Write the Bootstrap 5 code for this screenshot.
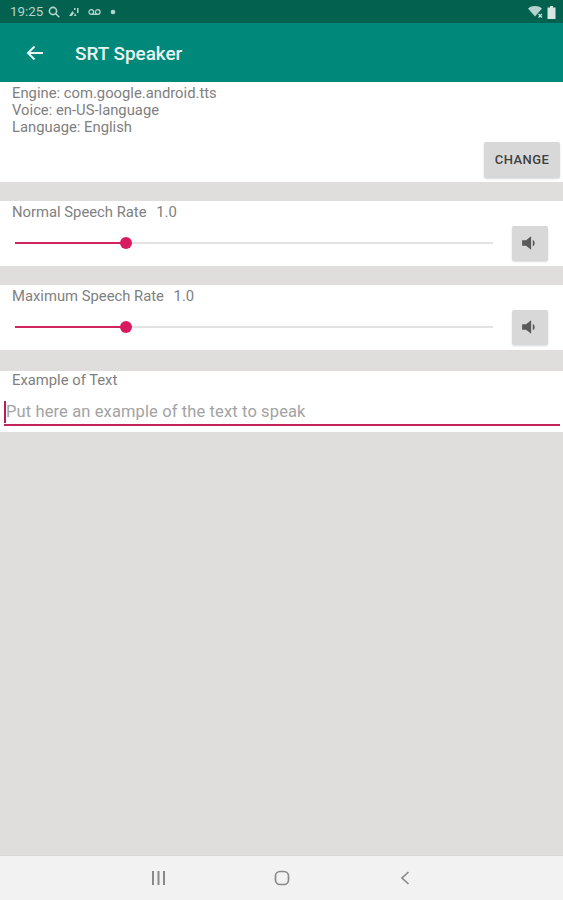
<!DOCTYPE html>
<html lang="en">
<head>
    <meta charset="UTF-8">
    <meta name="viewport" content="width=device-width, initial-scale=1">
    <title>SRT Speaker</title>
    <link href="https://cdn.jsdelivr.net/npm/bootstrap@5.3.2/dist/css/bootstrap.min.css" rel="stylesheet">
    <style>
        html, body {
            height: 900px;
            overflow: hidden;
        }
        body {
            background: #dfdedc;
            font-family: Roboto, "Liberation Sans", sans-serif;
            color: #808080;
        }
        .app-screen { height: 900px; }
        .status-bar {
            height: 23px;
            background: #02624f;
            color: #b5d3ce;
            font-size: 13.3px;
            padding: 1px 7px 0 10px;
        }
        .status-left { gap: 5px; }
        .tool-bar {
            height: 59px;
            background: #00887a;
            color: #eaf5f3;
            padding-left: 26px;
        }
        .tool-title {
            font-size: 18.9px;
            font-weight: 500;
            margin-left: 31px;
            padding-top: 3px;
        }
        .panel-box { background: #fff; }
        .engine-box {
            height: 100px;
            margin-bottom: 19px;
            padding: 3px 3px 4px 12px;
        }
        .info-text {
            font-size: 14.8px;
            line-height: 17px;
        }
        .change-btn {
            width: 76px;
            height: 36px;
            background: #d8d8d8;
            color: #3f3f3f;
            font-size: 13px;
            font-weight: 500;
            letter-spacing: .4px;
            border-radius: 2px;
            box-shadow: 0 1px 2px rgba(0, 0, 0, .15);
        }
        .rate-box {
            height: 65px;
            margin-bottom: 19px;
            padding: 3px 15px 0 12px;
        }
        .rate-box .rate-num { margin-left: 6px; }
        .rate-row {
            height: 36px;
            margin-top: 4px;
            padding-left: 3px;
        }
        .seek-line {
            height: 2px;
            width: 478px;
            background: #e2e2e2;
        }
        .seek-fill {
            width: 110px;
            height: 2px;
            background: #d0245f;
        }
        .seek-dot {
            width: 12px;
            height: 12px;
            top: -5px;
            left: 105px;
            background: #d81b60;
        }
        .speak-btn {
            width: 36px;
            height: 35px;
            margin-left: 19px;
            background: #d8d8d8;
            border-radius: 2px;
            box-shadow: 0 1px 2px rgba(0, 0, 0, .15);
        }
        .example-box {
            height: 61px;
            margin-top: 21px;
            padding: 0 3px 0 4px;
        }
        .example-label {
            padding-left: 8px;
            padding-top: 1px;
            height: 29px;
        }
        .example-input {
            height: 26px;
            border-bottom: 2px solid #c2255c;
            font-size: 16.5px;
            line-height: 24px;
            color: #a3a3a3;
            letter-spacing: .12px;
        }
        .text-caret {
            width: 2px;
            height: 22px;
            background: #c2185b;
        }
        .nav-strip {
            height: 45px;
            background: #f2f2f2;
            border-top: 1px solid #d8d8d8;
        }
        .nav-slot { width: 123px; }
    </style>
</head>
<body>
    <div class="app-screen d-flex flex-column">
        <!-- status bar -->
        <div class="status-bar d-flex align-items-center justify-content-between">
            <div class="status-left d-flex align-items-center">
                <span>19:25</span>
                <svg width="12" height="12" viewBox="0 0 12 12" fill="none" stroke="#b5d3ce" stroke-width="1.6"><circle cx="5" cy="5" r="3.6"/><path d="M7.8 7.8 11.3 11.3"/></svg>
                <svg class="ms-1" width="10" height="10" viewBox="0 0 10 10" fill="#b5d3ce"><path d="M0 9 3.500 4l1.500 2-2 3zM5 9l1-3 1.500 3zM5 1h1.500v2H5zM8 1h1.500v5H8z"/></svg>
                <svg class="ms-1" width="13" height="8" viewBox="0 0 14 8" fill="none" stroke="#b5d3ce" stroke-width="1.4"><circle cx="3.500" cy="4" r="2.500"/><circle cx="10.500" cy="4" r="2.500"/><path d="M3.500 6.500h7"/></svg>
                <svg class="ms-1" width="6" height="6" viewBox="0 0 6 6" fill="#b5d3ce"><circle cx="3" cy="3" r="2.300"/></svg>
            </div>
            <div class="d-flex align-items-center gap-1">
                <svg width="15" height="12" viewBox="0 0 15 12" fill="#b5d3ce"><path d="M0 2.500C3.500-.8 10.500-.8 14 2.500L7 10.500z"/><path d="M10.500 8l3.500 3.500M14 8l-3.500 3.500" stroke="#d5e6e3" stroke-width="1.200"/></svg>
                <svg width="9" height="13" viewBox="0 0 9 13" fill="#d5e6e3"><path d="M3 0h3v1.500h2.500V13H.5V1.500H3z"/></svg>
            </div>
        </div>

        <!-- toolbar -->
        <div class="tool-bar d-flex align-items-center">
            <svg width="18" height="16" viewBox="0 0 18 16" fill="none" stroke="#eaf5f3" stroke-width="2"><path d="M17 8H2M8.500 1.500 2 8l6.500 6.500"/></svg>
            <span class="tool-title">SRT Speaker</span>
        </div>

        <!-- engine -->
        <div class="panel-box engine-box d-flex flex-column">
            <div class="info-text">Engine: com.google.android.tts</div>
            <div class="info-text">Voice: en-US-language</div>
            <div class="info-text">Language: English</div>
            <div class="mt-auto d-flex justify-content-end">
                <button type="button" class="btn change-btn p-0 border-0">CHANGE</button>
            </div>
        </div>

        <!-- normal rate -->
        <div class="panel-box rate-box">
            <div class="info-text">Normal Speech Rate <span class="rate-num">1.0</span></div>
            <div class="rate-row d-flex align-items-center">
                <div class="seek-line position-relative">
                    <div class="seek-fill"></div>
                    <div class="seek-dot position-absolute rounded-circle"></div>
                </div>
                <div class="speak-btn d-flex align-items-center justify-content-center">
                    <svg width="18" height="18" viewBox="0 0 16 16" fill="#5a5a5a"><path d="M1 5.500h3.500L9 2v12L4.500 10.500H1z"/><path d="M10.500 5a3.500 3.500 0 0 1 0 6z"/></svg>
                </div>
            </div>
        </div>

        <!-- maximum rate -->
        <div class="panel-box rate-box mb-0">
            <div class="info-text">Maximum Speech Rate <span class="rate-num">1.0</span></div>
            <div class="rate-row d-flex align-items-center">
                <div class="seek-line position-relative">
                    <div class="seek-fill"></div>
                    <div class="seek-dot position-absolute rounded-circle"></div>
                </div>
                <div class="speak-btn d-flex align-items-center justify-content-center">
                    <svg width="18" height="18" viewBox="0 0 16 16" fill="#5a5a5a"><path d="M1 5.500h3.500L9 2v12L4.500 10.500H1z"/><path d="M10.500 5a3.500 3.500 0 0 1 0 6z"/></svg>
                </div>
            </div>
        </div>

        <!-- example -->
        <div class="panel-box example-box">
            <div class="example-label info-text">Example of Text</div>
            <div class="example-input d-flex align-items-center">
                <span class="text-caret"></span>
                <span>Put here an example of the text to speak</span>
            </div>
        </div>

        <div class="flex-grow-1"></div>

        <!-- navigation -->
        <div class="nav-strip d-flex align-items-center justify-content-center">
            <div class="nav-slot d-flex justify-content-center">
                <svg width="15" height="14" viewBox="0 0 15 14" fill="#8a8a8a"><path d="M1 0h2v14H1zM6.500 0h2v14h-2zM12 0h2v14h-2z"/></svg>
            </div>
            <div class="nav-slot d-flex justify-content-center">
                <svg width="16" height="16" viewBox="0 0 16 16" fill="none" stroke="#8a8a8a" stroke-width="1.700"><rect x="1.500" y="1.500" width="13" height="13" rx="4.500"/></svg>
            </div>
            <div class="nav-slot d-flex justify-content-center">
                <svg width="10" height="14" viewBox="0 0 10 14" fill="none" stroke="#8a8a8a" stroke-width="1.700"><path d="M8.500 1 2 7l6.500 6"/></svg>
            </div>
        </div>
    </div>
</body>
</html>
